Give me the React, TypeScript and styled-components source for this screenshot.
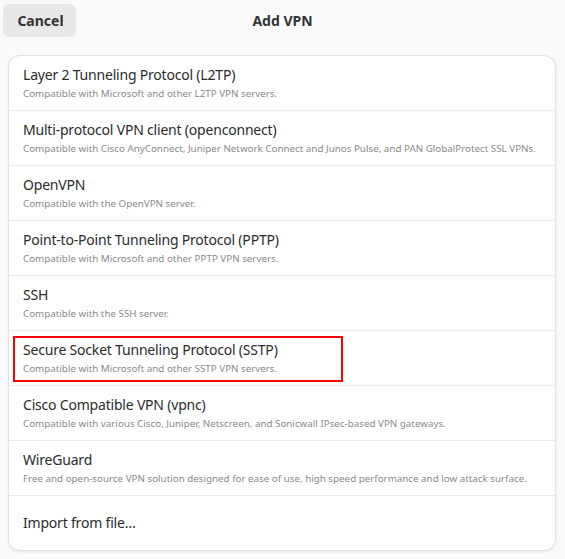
import React from "react";
import styled, { createGlobalStyle } from "styled-components";

const Global = createGlobalStyle`
  html, body { margin: 0; padding: 0; background: #fafafa; }
  body { font-family: "Noto Sans", "DejaVu Sans", sans-serif; color: #2e2e2e; }
`;

const Page = styled.div`
  width: 565px;
  height: 559px;
  display: flex;
  flex-direction: column;
  background: #fafafa;
  box-sizing: border-box;
`;

const Header = styled.div`
  position: relative;
  height: 41px;
  display: flex;
  align-items: center;
  justify-content: center;
`;

const CancelButton = styled.button`
  position: absolute;
  left: 3px;
  top: 4px;
  width: 73px;
  height: 33px;
  border: none;
  border-radius: 6px;
  background: #e8e8e8;
  font-family: "Noto Sans", sans-serif;
  font-weight: 700;
  font-size: 14px;
  color: #333;
  padding: 0 0 0 2px;
`;

const Title = styled.div`
  font-weight: 700;
  font-size: 14px;
  color: #333;
`;

const Card = styled.div`
  margin: 14px 9px 0 8px;
  background: #fff;
  border: 1px solid #e2e2e2;
  border-radius: 12px;
  box-shadow: 0 1px 3px rgba(0, 0, 0, 0.08);
  display: flex;
  flex-direction: column;
  overflow: hidden;
`;

const Row = styled.div<{ $last?: boolean }>`
  position: relative;
  height: 54px;
  display: flex;
  flex-direction: column;
  justify-content: center;
  padding: 0 14px;
  border-bottom: ${(p) => (p.$last ? "none" : "1px solid #ebebeb")};
`;

const RowTitle = styled.div`
  font-size: 14px;
  line-height: 20px;
  color: #2b2b2b;
  letter-spacing: -0.2px;
`;

const RowSubtitle = styled.div`
  font-size: 9.8px;
  line-height: 14px;
  color: #8a8a8a;
  margin-top: 2px;
`;

const Highlight = styled.div`
  position: absolute;
  left: 4px;
  top: 5px;
  width: 326px;
  height: 42px;
  border: 2px solid #f00;
  pointer-events: none;
`;

const items = [
  ["Layer 2 Tunneling Protocol (L2TP)", "Compatible with Microsoft and other L2TP VPN servers."],
  [
    "Multi-protocol VPN client (openconnect)",
    "Compatible with Cisco AnyConnect, Juniper Network Connect and Junos Pulse, and PAN GlobalProtect SSL VPNs.",
  ],
  ["OpenVPN", "Compatible with the OpenVPN server."],
  ["Point-to-Point Tunneling Protocol (PPTP)", "Compatible with Microsoft and other PPTP VPN servers."],
  ["SSH", "Compatible with the SSH server."],
  ["Secure Socket Tunneling Protocol (SSTP)", "Compatible with Microsoft and other SSTP VPN servers."],
  [
    "Cisco Compatible VPN (vpnc)",
    "Compatible with various Cisco, Juniper, Netscreen, and Sonicwall IPsec-based VPN gateways.",
  ],
  [
    "WireGuard",
    "Free and open-source VPN solution designed for ease of use, high speed performance and low attack surface.",
  ],
];

export default function App() {
  return (
    <>
      <Global />
      <Page>
        <Header>
          <CancelButton>Cancel</CancelButton>
          <Title>Add VPN</Title>
        </Header>
        <Card>
          {items.map(([t, s], i) => (
            <Row key={t}>
              <RowTitle>{t}</RowTitle>
              <RowSubtitle>{s}</RowSubtitle>
              {i === 5 && <Highlight />}
            </Row>
          ))}
          <Row $last>
            <RowTitle>Import from file…</RowTitle>
          </Row>
        </Card>
      </Page>
    </>
  );
}
